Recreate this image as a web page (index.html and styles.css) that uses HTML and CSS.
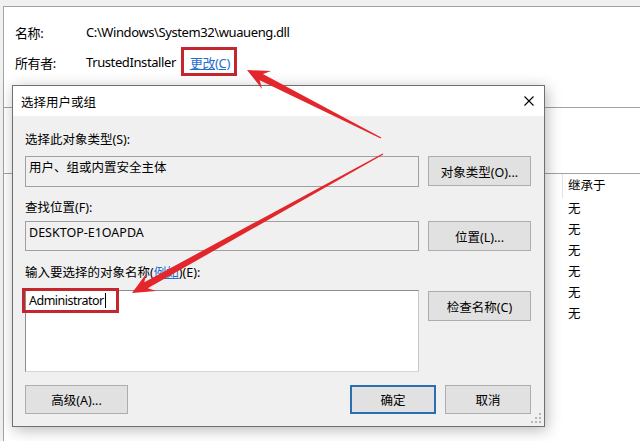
FILE: index.html
```html
<!DOCTYPE html>
<html lang="zh-CN">
<head>
<meta charset="utf-8">
<title>选择用户或组</title>
<link rel="stylesheet" href="styles.css">
</head>
<body>
<div class="props">
  <div class="info">
    <div class="info-row"><span class="info-label">名称:</span><span>C:\Windows\System32\wuaueng.dll</span></div>
    <div class="info-row"><span class="info-label">所有者:</span><span>TrustedInstaller</span><span class="link change">更改(C)</span></div>
  </div>
  <div class="perm-section">
    <div class="perm-list">
      <div class="list-head"><div class="col-a"></div><div class="col-b">继承于</div></div>
      <div class="list-row"><div class="col-a"></div><div class="col-b">无</div></div>
      <div class="list-row"><div class="col-a"></div><div class="col-b">无</div></div>
      <div class="list-row"><div class="col-a"></div><div class="col-b">无</div></div>
      <div class="list-row"><div class="col-a"></div><div class="col-b">无</div></div>
      <div class="list-row"><div class="col-a"></div><div class="col-b">无</div></div>
      <div class="list-row"><div class="col-a"></div><div class="col-b">无</div></div>
    </div>
  </div>
</div>

<div class="dialog">
  <div class="titlebar">
    <span>选择用户或组</span>
    <svg class="close" width="10" height="10" viewBox="0 0 10 10"><path d="M0.5 0.5 L9.5 9.5 M9.5 0.5 L0.5 9.5" stroke="#000" stroke-width="1.1" fill="none"/></svg>
  </div>
  <div class="dlg-body">
    <div class="label">选择此对象类型(S):</div>
    <div class="field-row row1">
      <div class="field ro tall">用户、组或内置安全主体</div>
      <button class="btn">对象类型(O)...</button>
    </div>
    <div class="label label2">查找位置(F):</div>
    <div class="field-row row2">
      <div class="field ro">DESKTOP-E1OAPDA</div>
      <button class="btn">位置(L)...</button>
    </div>
    <div class="label label3">输入要选择的对象名称(<span class="link">例如</span>)(E):</div>
    <div class="field-row row3">
      <div class="field names">Administrator<span class="caret"></span></div>
      <button class="btn check">检查名称(C)</button>
    </div>
    <div class="footer">
      <button class="btn small">高级(A)...</button>
      <div class="footer-right">
        <button class="btn ok">确定</button>
        <button class="btn cancel">取消</button>
      </div>
    </div>
  </div>
  <svg class="grip" width="10" height="10" viewBox="0 0 10 10">
    <rect x="8" y="0" width="2" height="2" fill="#b5b5b5"/>
    <rect x="4" y="4" width="2" height="2" fill="#b5b5b5"/>
    <rect x="8" y="4" width="2" height="2" fill="#b5b5b5"/>
    <rect x="0" y="8" width="2" height="2" fill="#b5b5b5"/>
    <rect x="4" y="8" width="2" height="2" fill="#b5b5b5"/>
    <rect x="8" y="8" width="2" height="2" fill="#b5b5b5"/>
  </svg>
</div>

<svg class="annot" width="640" height="441" viewBox="0 0 640 441">
  <rect x="182.5" y="48.5" width="53" height="26" fill="none" stroke="#c4262e" stroke-width="3"/>
  <rect x="23.5" y="289.5" width="94" height="22" fill="none" stroke="#c4262e" stroke-width="3"/>
  <polygon fill="#e3262b" points="247,70 262.1,88.9 259.7,80.3 380.7,138.6 381.3,137.4 262.9,74.1 271.1,71.1"/>
  <polygon fill="#e3262b" points="132,293 156.1,291.1 147.7,288.3 383.3,154.6 382.7,153.4 144.3,282.2 146.4,273.6"/>
</svg>
</body>
</html>
```

FILE: styles.css
```css
html, body {
  margin: 0;
  padding: 0;
}

body {
  position: relative;
  width: 640px;
  height: 441px;
  overflow: hidden;
  background: #f0f0f0;
  color: #000;
  font-family: "Noto Sans", "Noto Sans CJK SC", sans-serif;
}

.link {
  color: #1f6fcf;
  text-decoration: underline;
}

/* background properties window */
.props {
  margin: 6px 0 0 3px;
  height: 435px;
  box-sizing: border-box;
  background: #fff;
  border-top: 1px solid #a3a3a3;
  border-left: 1px solid #a3a3a3;
}

.info {
  padding: 10px 0 0 11px;
  font-size: 13px;
  letter-spacing: -0.4px;
}

.info-row {
  display: flex;
  align-items: center;
  height: 30px;
}

.info-label {
  width: 71px;
}

.change {
  margin-left: 14px;
}

.perm-section {
  margin-top: 30px;
  border-top: 1px solid #a3a3a3;
}

.perm-list {
  margin-top: 65px;
  border-top: 1px solid #a3a3a3;
  font-size: 12.5px;
}

.list-head,
.list-row {
  display: grid;
  grid-template-columns: 559px 1fr;
}

.list-head {
  height: 24px;
  line-height: 24px;
}

.list-head .col-a {
  border-right: 1px solid #e3e3e3;
}

.list-row {
  height: 21px;
  line-height: 21px;
}

.col-b {
  padding-left: 5px;
}

/* dialog */
.dialog {
  position: absolute;
  left: 12px;
  top: 85px;
  width: 533px;
  box-sizing: border-box;
  background: #f0f0f0;
  border: 1px solid #707070;
  box-shadow: 2px 3px 14px rgba(0, 0, 0, 0.28);
  font-size: 12.5px;
}

.titlebar {
  height: 30px;
  background: #fff;
  display: flex;
  align-items: center;
  justify-content: space-between;
  padding: 0 10px 0 8px;
  font-size: 12.5px;
}

.close {
  display: block;
}

.dlg-body {
  padding: 15px 13px 12px 12px;
}

.label {
  height: 18px;
  line-height: 18px;
  white-space: nowrap;
}

.label2 {
  margin-top: 12px;
}

.label3 {
  margin-top: 13px;
}

.field-row {
  display: flex;
  align-items: flex-start;
  gap: 9px;
}

.row1 {
  margin-top: 7px;
}

.row2 {
  margin-top: 4px;
}

.row3 {
  margin-top: 8px;
}

.field {
  flex: 1;
  box-sizing: border-box;
  height: 30px;
  padding: 2px 3px;
  line-height: 18px;
  border: 1px solid #a0a0a0;
}

.field.tall {
  height: 31px;
}

.ro {
  background: #f0f0f0;
}

.names {
  height: 82px;
  padding-top: 1px;
  background: #fff;
  letter-spacing: -0.5px;
  border-color: #8c8c8c #c8c8c8 #d4d4d4 #8c8c8c;
}

.caret {
  display: inline-block;
  width: 0;
  height: 15px;
  margin-left: 1px;
  border-left: 1px solid #000;
  vertical-align: -3px;
}

.btn {
  width: 103px;
  height: 30px;
  box-sizing: border-box;
  margin: 0;
  padding: 0;
  background: #e1e1e1;
  border: 1px solid #adadad;
  font: inherit;
  color: #000;
}

.btn.check {
  margin-top: 1px;
}

.footer {
  margin-top: 13px;
  display: flex;
  justify-content: space-between;
}

.footer .btn {
  height: 29px;
}

.footer-right {
  display: flex;
  gap: 9px;
}

.btn.ok,
.btn.cancel {
  width: 86px;
}

.btn.ok {
  border: 2px solid #2a70b0;
}

.grip {
  position: absolute;
  right: 3px;
  bottom: 3px;
}

.annot {
  position: absolute;
  left: 0;
  top: 0;
  pointer-events: none;
}
```
